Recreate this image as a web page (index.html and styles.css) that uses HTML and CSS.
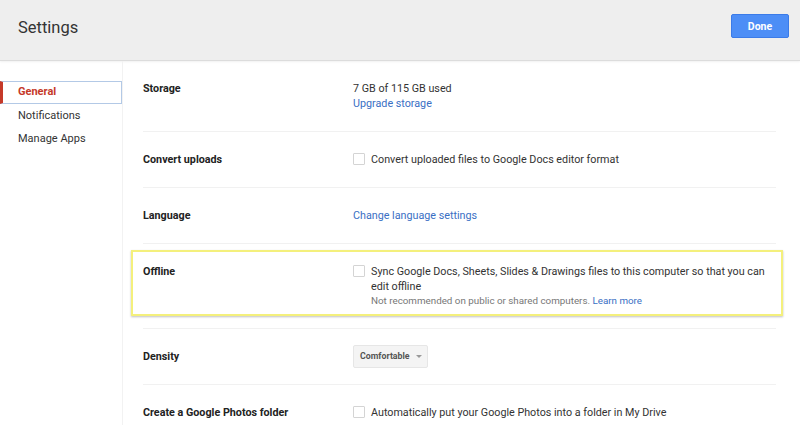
FILE: index.html
```html
<!DOCTYPE html>
<html>
<head>
<meta charset="utf-8">
<link rel="stylesheet" href="styles.css">
</head>
<body>
<header class="topbar">
  <h1 class="title">Settings</h1>
  <button class="done">Done</button>
</header>
<div class="main">
  <nav class="side">
    <div class="nav-item active">General</div>
    <div class="nav-item">Notifications</div>
    <div class="nav-item">Manage Apps</div>
  </nav>
  <section class="content">
    <div class="row">
      <div class="label">Storage</div>
      <div class="value">
        <div>7 GB of 115 GB used</div>
        <a class="link">Upgrade storage</a>
      </div>
    </div>
    <div class="row">
      <div class="label">Convert uploads</div>
      <div class="value check"><span class="box"></span><span>Convert uploaded files to Google Docs editor format</span></div>
    </div>
    <div class="row">
      <div class="label">Language</div>
      <div class="value"><a class="link">Change language settings</a></div>
    </div>
    <div class="row offline">
      <div class="highlight"></div>
      <div class="label">Offline</div>
      <div class="value check"><span class="box"></span>
        <div>
          <div>Sync Google Docs, Sheets, Slides &amp; Drawings files to this computer so that you can edit offline</div>
          <div class="note">Not recommended on public or shared computers. <a class="link">Learn more</a></div>
        </div>
      </div>
    </div>
    <div class="row">
      <div class="label">Density</div>
      <div class="value select"><span class="dropdown">Comfortable<span class="caret"></span></span></div>
    </div>
    <div class="row">
      <div class="label">Create a Google Photos folder</div>
      <div class="value check"><span class="box"></span><span>Automatically put your Google Photos into a folder in My Drive</span></div>
    </div>
  </section>
</div>
</body>
</html>
```
FILE: styles.css
```css
html, body {
  margin: 0;
  padding: 0;
  background: #fff;
  font-family: Roboto, "Liberation Sans", Arial, sans-serif;
  color: #333;
  font-size: 10.75px;
  overflow: hidden;
}
.topbar {
  height: 60px;
  background: #eeeeee;
  border-bottom: 1px solid #dcdcdc;
  box-shadow: 0 1px 2px rgba(0,0,0,0.06);
  display: flex;
  align-items: flex-start;
  justify-content: space-between;
  box-sizing: content-box;
}
.title {
  margin: 16px 0 0 18px;
  font-size: 16.5px;
  font-weight: 400;
  color: #333;
  line-height: 24px;
}
.done {
  margin: 14px 11px 0 0;
  width: 58px;
  height: 24px;
  border: 1px solid #3b7be8;
  border-radius: 2px;
  background: #4d8ef6;
  color: #fff;
  font-family: Roboto, "Liberation Sans", Arial, sans-serif;
  font-weight: 700;
  font-size: 10.5px;
  padding: 0;
}
.main {
  display: flex;
  height: 364px;
}
.side {
  width: 122px;
  border-right: 1px solid #f2f2f2;
  padding-top: 20px;
  flex-shrink: 0;
}
.nav-item {
  height: 23px;
  line-height: 23px;
  padding-left: 18px;
  font-size: 11px;
  color: #333;
  box-sizing: border-box;
}
.nav-item.active {
  color: #c53929;
  font-weight: 700;
  border: 1px solid #b3c9e6;
  border-left: 3px solid #c53929;
  padding-left: 15px;
  line-height: 20px;
  height: 23px;
}
.content {
  flex: 1;
  padding-left: 20px;
  padding-right: 24px;
}
.row {
  display: flex;
  padding: 20px 0 20px;
  border-bottom: 1px solid #f1f1f1;
  line-height: 15px;
  position: relative;
}
.row:last-child { border-bottom: none; }
.label {
  width: 210px;
  flex-shrink: 0;
  font-weight: 700;
  color: #222;
}
.value {
  flex: 1;
  color: #333;
}
.link {
  color: #3a6fc4;
  text-decoration: none;
}
.check {
  display: flex;
  align-items: flex-start;
}
.box {
  width: 10px;
  height: 10px;
  border: 1px solid #d4d4d4;
  border-radius: 1px;
  margin: 1px 6px 0 0;
  flex-shrink: 0;
  background: #fff;
}
.note {
  color: #777;
  font-size: 9.8px;
  line-height: 14px;
}
.offline {
  padding-top: 20px;
  padding-bottom: 20px;
}
.highlight {
  position: absolute;
  left: -12px;
  right: -7px;
  top: 6px;
  bottom: 12px;
  border: 2px solid #f4f07c;
  box-shadow: 0 1px 2px rgba(0,0,0,0.25);
  pointer-events: none;
}
.select {
  display: flex;
  align-items: center;
  height: 15px;
}
.dropdown {
  display: flex;
  align-items: center;
  box-sizing: border-box;
  height: 23px;
  padding: 0 5px 0 6px;
  background: #f4f4f4;
  border: 1px solid #e6e6e6;
  border-radius: 2px;
  font-weight: 700;
  color: #555;
  font-size: 8.8px;
}
.caret {
  width: 0;
  height: 0;
  border-left: 3px solid transparent;
  border-right: 3px solid transparent;
  border-top: 3px solid #999;
  margin-left: 6px;
}
```
